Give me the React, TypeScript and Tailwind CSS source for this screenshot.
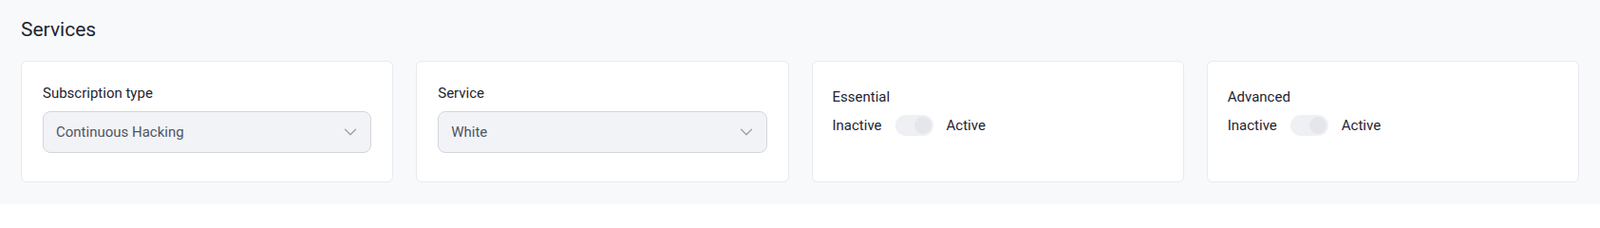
import { ChevronDown } from 'lucide-react';

function SelectCard({ label, value }: { label: string; value: string }) {
  return (
    <div className="h-32 rounded-md border border-[#e8eaee] bg-white px-[22px] pt-[22px]">
      <div className="text-[15px] leading-[22px] text-[#1f2430]">{label}</div>
      <div className="mt-2 flex h-11 items-center justify-between rounded-lg border border-[#d4d6dd] bg-[#f2f3f6] pl-[13px] pr-[10px]">
        <span className="text-[15px] text-[#4f5563]">{value}</span>
        <ChevronDown className="h-[22px] w-[22px] text-[#9aa0aa]" strokeWidth={1.4} />
      </div>
    </div>
  );
}

function ToggleCard({ label }: { label: string }) {
  return (
    <div className="h-32 rounded-md border border-[#e8eaee] bg-white px-[21px] pt-[26px]">
      <div className="text-[15px] leading-[22px] text-[#1f2430]">{label}</div>
      <div className="mt-[8px] flex items-center gap-3.5 text-[15px] text-[#1f2430]">
        <span>Inactive</span>
        <span className="flex h-[22px] w-10 items-center justify-end rounded-full bg-[#eff0f4] px-[2px]">
          <span className="h-[18px] w-[18px] rounded-full bg-[#e5e6eb]" />
        </span>
        <span>Active</span>
      </div>
    </div>
  );
}

export default function App() {
  return (
    <div className="min-h-[215px] bg-[#f8f9fb] px-[22px] pt-[17px] font-['Roboto',sans-serif]">
      <h2 className="text-[21px] leading-7 text-[#1f2430]">Services</h2>
      <div className="mt-[19px] grid grid-cols-4 gap-6">
        <SelectCard label="Subscription type" value="Continuous Hacking" />
        <SelectCard label="Service" value="White" />
        <ToggleCard label="Essential" />
        <ToggleCard label="Advanced" />
      </div>
    </div>
  );
}
